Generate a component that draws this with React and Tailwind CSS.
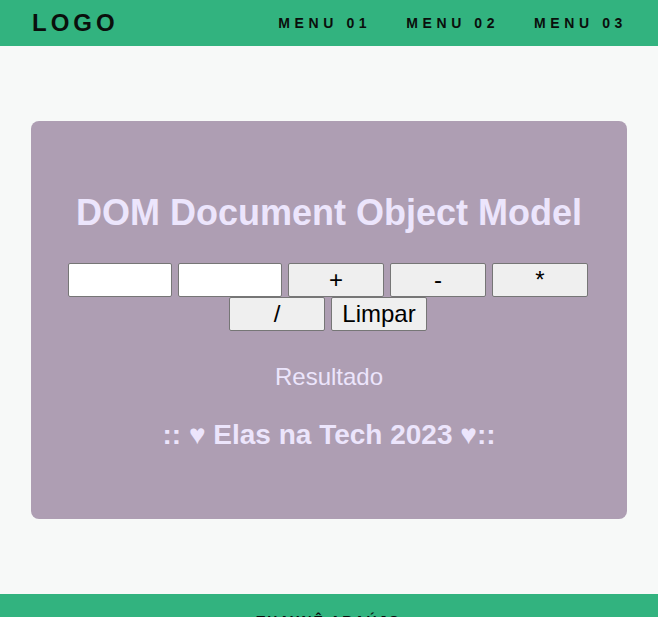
export default function App() {
  const font = { fontFamily: '"Liberation Sans", Arial, sans-serif' };
  const btn = "w-[96px] h-[34px] bg-[#efefef] border border-[#767676] rounded-[2px] text-[24px] leading-none text-black";
  return (
    <div style={font} className="min-h-screen bg-[#f7f9f8] flex flex-col">
      <header className="h-[46px] bg-[#32b37f] flex items-center justify-between pl-[32px] pr-[31px]">
        <div className="text-[24px] font-bold tracking-[4px] text-[#0a0f0c] leading-none">LOGO</div>
        <nav className="flex gap-[35px] text-[14px] font-bold tracking-[4.6px] text-[#0a0f0c]">
          <span>MENU 01</span>
          <span>MENU 02</span>
          <span>MENU 03</span>
        </nav>
      </header>
      <main className="pt-[75px] pb-[75px] px-[31px]">
        <section className="bg-[#ae9eb3] rounded-[8px] h-[398px] flex flex-col items-center pt-[71px]">
          <h1 className="text-[36px] font-bold text-[#ece5fc] leading-[41px]">DOM Document Object Model</h1>
          <div className="mt-[30px] flex flex-wrap justify-center gap-x-[6px] w-full pr-[2px]">
            <input className="w-[104px] h-[34px] bg-white border border-[#767676] rounded-[2px]" />
            <input className="w-[104px] h-[34px] bg-white border border-[#767676] rounded-[2px]" />
            <button className={btn}>+</button>
            <button className={btn}>-</button>
            <button className={btn}>*</button>
            <button className={btn}>/</button>
            <button className={btn}>Limpar</button>
          </div>
          <p className="mt-[32px] text-[24px] text-[#ece5fc] leading-[28px]">Resultado</p>
          <h2 className="mt-[28px] text-[28px] font-bold text-[#ece5fc] leading-[32px]">:: ♥ Elas na Tech 2023 ♥::</h2>
        </section>
      </main>
      <footer className="bg-[#32b37f] h-[60px] flex justify-center pt-[17px]">
        <span className="text-[14px] font-bold tracking-[2px] text-[#0a0f0c]">THAYNÊ ARAÚJO</span>
      </footer>
    </div>
  );
}
